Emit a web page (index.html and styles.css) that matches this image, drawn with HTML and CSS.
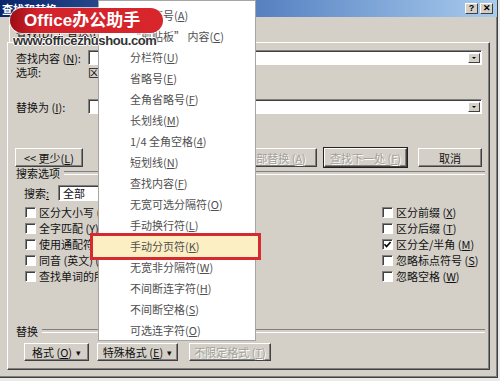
FILE: index.html
```html
<!DOCTYPE html>
<html lang="zh-CN">
<head>
    <meta charset="UTF-8">
    <meta name="viewport" content="width=device-width, initial-scale=1.0">
    <title>查找和替换</title>
    <link rel="stylesheet" href="styles.css">
</head>
<body>
    <div class="window">
        <div class="titlebar">
            <span class="title">查找和替换</span>
            <div class="title-btns">
                <span class="tbtn">?</span>
                <span class="tbtn close">✕</span>
            </div>
        </div>

        <div class="tabs">
            <span class="tab">查找(<u>D</u>)</span>
            <span class="tab active">替换(<u>P</u>)</span>
            <span class="tab">定位(<u>G</u>)</span>
        </div>

        <div class="panel">
            <div class="row find">
                <span class="lbl">查找内容 (<u>N</u>):</span>
                <div class="combo"><span class="drop"></span></div>
            </div>
            <div class="row opts">
                <span class="lbl">选项:</span>
                <span>区分全/半角</span>
            </div>
            <div class="row replace">
                <span class="lbl">替换为 (<u>I</u>):</span>
                <div class="combo"><span class="drop"></span></div>
            </div>

            <div class="row actions">
                <button class="btn less">&lt;&lt; 更少(<u>L</u>)</button>
                <div class="right">
                    <button class="btn w83 off">全部替换 (<u>A</u>)</button>
                    <button class="btn w83 off default">查找下一处 (<u>F</u>)</button>
                    <button class="btn cancel">取消</button>
                </div>
            </div>

            <div class="group">搜索选项</div>
            <div class="row search">
                <span class="slbl">搜索<u>:</u></span>
                <div class="select">全部</div>
            </div>

            <div class="checks">
                <div class="col">
                    <label class="check"><span class="box"></span>区分大小写 (<u>H</u>)</label>
                    <label class="check"><span class="box"></span>全字匹配 (<u>Y</u>)</label>
                    <label class="check"><span class="box"></span>使用通配符 (<u>U</u>)</label>
                    <label class="check"><span class="box"></span>同音 (英文) (<u>K</u>)</label>
                    <label class="check"><span class="box"></span>查找单词的所有形式 (英文) (<u>W</u>)</label>
                </div>
                <div class="col">
                    <label class="check"><span class="box"></span>区分前缀 (<u>X</u>)</label>
                    <label class="check"><span class="box"></span>区分后缀 (<u>T</u>)</label>
                    <label class="check"><span class="box"><svg width="9" height="9" viewBox="0 0 9 9"><path d="M1.5 4.2 L3.6 6.5 L7.6 2" fill="none" stroke="#000" stroke-width="1.6"/></svg></span>区分全/半角 (<u>M</u>)</label>
                    <label class="check"><span class="box"></span>忽略标点符号 (<u>S</u>)</label>
                    <label class="check"><span class="box"></span>忽略空格 (<u>W</u>)</label>
                </div>
            </div>

            <div class="group gap">替换</div>
            <div class="row bottom">
                <button class="btn fmt">格式 (<u>O</u>) <span class="arr">▾</span></button>
                <button class="btn special">特殊格式 (<u>E</u>) <span class="arr">▾</span></button>
                <button class="btn nofmt off">不限定格式 (<u>T</u>)</button>
            </div>
        </div>

        <ul class="menu">
            <li>段落符号(<u>A</u>)</li>
            <li>“剪贴板” 内容(<u>C</u>)</li>
            <li>分栏符(<u>U</u>)</li>
            <li>省略号(<u>E</u>)</li>
            <li>全角省略号(<u>F</u>)</li>
            <li>长划线(<u>M</u>)</li>
            <li>1/4 全角空格(<u>4</u>)</li>
            <li>短划线(<u>N</u>)</li>
            <li>查找内容(<u>F</u>)</li>
            <li>无宽可选分隔符(<u>O</u>)</li>
            <li>手动换行符(<u>L</u>)</li>
            <li class="hot">手动分页符(<u>K</u>)</li>
            <li>无宽非分隔符(<u>W</u>)</li>
            <li>不间断连字符(<u>H</u>)</li>
            <li>不间断空格(<u>S</u>)</li>
            <li>可选连字符(<u>O</u>)</li>
        </ul>

        <div class="logo">
            <div class="pill">Office办公助手</div>
            <div class="url">www.officezhushou.com</div>
        </div>
    </div>
</body>
</html>
```

FILE: styles.css
```css
*{
    padding: 0;
    margin: 0;
    box-sizing: border-box;
}

body{
    width: 500px;
    height: 381px;
    overflow: hidden;
    background-color: #ebeae6;
    font-family: "Noto Sans CJK SC", sans-serif;
    font-size: 11px;
    color: #111;
}
u{
    text-decoration: underline;
    text-underline-offset: 1px;
}

.window{
    position: relative;
    width: 498px;
    height: 378px;
    background-color: #d4d0c8;
    border-right: 1px solid #404040;
    border-bottom: 1px solid #404040;
    box-shadow: inset -1px -1px #808080;
}

/* title bar */
.titlebar{
    height: 17px;
    display: flex;
    align-items: center;
    justify-content: space-between;
    padding: 0 4px 0 2px;
    background: linear-gradient(to right, #0a246a, #5b86c4 55%, #a8cbee);
}
.title{
    color: white;
    font-weight: bold;
    font-size: 11px;
}
.title-btns{
    display: flex;
    gap: 2px;
}
.tbtn{
    width: 13px;
    height: 11px;
    display: flex;
    justify-content: center;
    align-items: center;
    background-color: #d4d0c8;
    border: 1px solid;
    border-color: #fff #404040 #404040 #fff;
    font-family: "Liberation Sans", sans-serif;
    font-weight: bold;
    font-size: 9px;
    line-height: 1;
    color: #000;
}

/* tabs */
.tabs{
    height: 25px;
    display: flex;
    align-items: flex-end;
    padding-left: 9px;
}
.tab{
    height: 18px;
    padding: 0 6px;
    line-height: 17px;
    border: 1px solid;
    border-bottom: none;
    border-color: #fff #404040 #fff #fff;
    border-radius: 2px 2px 0 0;
}
.tab.active{
    height: 21px;
    line-height: 19px;
}

/* panel */
.panel{
    margin-left: 7px;
    width: 483px;
    height: 328px;
    padding: 0 7px 0 8px;
    border: 1px solid;
    border-color: #fff #404040 #404040 #fff;
    box-shadow: inset -1px -1px #808080;
    display: flex;
    flex-direction: column;
}
.row{
    display: flex;
    align-items: center;
}
.lbl{
    width: 72px;
    flex-shrink: 0;
}
.find{
    margin-top: 7px;
    height: 15px;
}
.opts{
    margin-top: 1px;
    height: 12px;
}
.replace{
    margin-top: 21px;
    height: 15px;
}
.combo{
    flex: 1;
    height: 15px;
    position: relative;
    background-color: white;
    border: 1px solid;
    border-color: #808080 #fff #fff #808080;
    box-shadow: inset 1px 1px #404040;
}
.drop{
    position: absolute;
    right: 1px;
    top: 2px;
    width: 12px;
    height: 10px;
    background-color: #d4d0c8;
    border: 1px solid;
    border-color: #fff #404040 #404040 #fff;
}
.drop::after{
    content: "";
    position: absolute;
    left: 3px;
    top: 3px;
    border-left: 2px solid transparent;
    border-right: 2px solid transparent;
    border-top: 2px solid #000;
}

/* buttons */
.btn{
    height: 19px;
    background-color: #d4d0c8;
    border: 1px solid;
    border-color: #fff #404040 #404040 #fff;
    box-shadow: inset -1px -1px #808080;
    font-family: inherit;
    font-size: 11px;
    color: #111;
    display: flex;
    justify-content: center;
    align-items: center;
}
.btn.off{
    color: #a3a09a;
    text-shadow: 1px 1px #fff;
}
.btn.default{
    outline: 1px solid #222;
}
.actions{
    margin-top: 34px;
    height: 19px;
}
.less{
    margin-left: -1px;
    width: 68px;
}
.right{
    margin-left: auto;
    display: flex;
    gap: 7px;
}
.w83{
    width: 83px;
}
.cancel{
    width: 64px;
    margin-left: 4px;
}

/* group headers */
.group{
    height: 12px;
    display: flex;
    align-items: center;
    gap: 4px;
    margin-right: -3px;
}
.group::after{
    content: "";
    flex: 1;
    height: 2px;
    border-top: 1px solid #808080;
    border-bottom: 1px solid #fff;
}
.group.gap{
    margin-top: 41px;
}

.search{
    margin-top: 6px;
    height: 16px;
}
.slbl{
    margin-left: 8px;
    width: 34px;
}
.select{
    width: 100px;
    height: 16px;
    padding-left: 4px;
    line-height: 14px;
    background-color: white;
    border: 1px solid;
    border-color: #808080 #fff #fff #808080;
    box-shadow: inset 1px 1px #404040;
}

/* checkboxes */
.checks{
    margin-top: 3px;
    display: flex;
}
.col{
    display: flex;
    flex-direction: column;
}
.col:first-child{
    width: 366px;
    padding-left: 9px;
}
.check{
    height: 16px;
    display: flex;
    align-items: center;
    white-space: pre;
}
.box{
    width: 11px;
    height: 11px;
    margin-right: 3px;
    display: flex;
    justify-content: center;
    align-items: center;
    background-color: white;
    border: 1px solid;
    border-color: #808080 #fff #fff #808080;
    box-shadow: inset 1px 1px #404040;
}

.bottom{
    margin-top: 6px;
    height: 18px;
    padding-left: 8px;
}
.bottom .btn{
    height: 18px;
}
.fmt{
    width: 65px;
}
.special{
    width: 81px;
    margin-left: 8px;
}
.nofmt{
    width: 82px;
    margin-left: 11px;
}
.arr{
    margin-left: 4px;
    font-size: 9px;
}

/* popup menu */
.menu{
    position: absolute;
    left: 98px;
    top: 0;
    z-index: 10;
    width: 158px;
    height: 341px;
    padding-top: 4px;
    list-style: none;
    background-color: white;
    border: 1px solid #a5a5a5;
    color: #505050;
}
.menu li{
    position: relative;
    height: 21px;
    line-height: 21px;
    padding-left: 31px;
}
.menu li.hot::before{
    content: "";
    position: absolute;
    left: -9px;
    right: -6px;
    top: -3px;
    bottom: -3px;
    z-index: -1;
    background-color: #fcefc4;
    border: 3px solid #d42a30;
}

/* watermark logo */
.logo{
    position: absolute;
    left: 10px;
    top: 8px;
    z-index: 20;
}
.pill{
    width: 153px;
    height: 25px;
    padding-left: 14px;
    border-radius: 13px;
    background: linear-gradient(to right, #9e0e15, #d3222a 18%, #d8262c);
    box-shadow: 0 0 0 1px rgba(255,255,255,0.7);
    color: white;
    font-family: "Liberation Sans", "Noto Sans CJK SC", sans-serif;
    font-weight: bold;
    font-size: 17px;
    line-height: 25px;
}
.url{
    margin-left: 3px;
    font-family: "Liberation Sans", sans-serif;
    font-weight: bold;
    font-size: 13px;
    letter-spacing: -0.4px;
    color: #333;
    text-shadow: 1px 0 #fff, -1px 0 #fff, 0 1px #fff, 0 -1px #fff;
}
```
